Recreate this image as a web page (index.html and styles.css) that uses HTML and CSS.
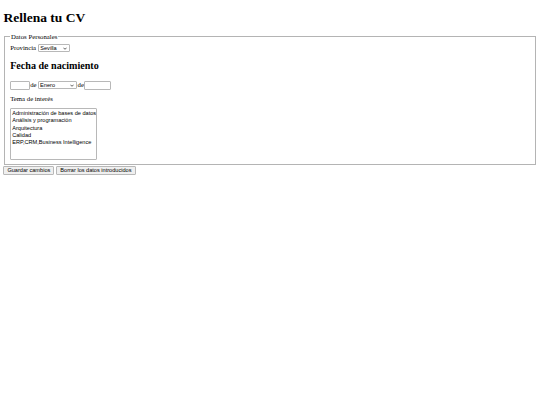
FILE: index.html
```html
<!DOCTYPE html>
<html lang="es">
<head>
    <meta charset="UTF-8">
    <meta name="viewport" content="width=device-width, initial-scale=1.0">
    <title>Rellena tu CV</title>
    <link rel="stylesheet" href="styles.css">
</head>
<body>
    <h1>Rellena tu CV</h1>
    <form class="cv-form">
        <fieldset class="datos">
            <legend>Datos Personales</legend>
            <label>Provincia <select class="provincia" name="provincia">
                <option>Sevilla</option>
                <option>Cádiz</option>
                <option>Huelva</option>
                <option>Málaga</option>
            </select></label>

            <h2>Fecha de nacimiento</h2>
            <div class="fecha">
                <input type="text" class="dia" name="dia">de<select class="mes" name="mes">
                    <option>Enero</option>
                    <option>Febrero</option>
                    <option>Marzo</option>
                </select>de<input type="text" class="anio" name="anio">
            </div>

            <p class="tema">Tema de interés</p>
            <select class="temas" name="temas" multiple>
                <option>Administración de bases de datos</option>
                <option>Análisis y programación</option>
                <option>Arquitectura</option>
                <option>Calidad</option>
                <option>ERP,CRM,Business Intelligence</option>
            </select>
        </fieldset>
        <div class="acciones">
            <input type="submit" value="Guardar cambios">
            <input type="reset" value="Borrar los datos introducidos">
        </div>
    </form>
</body>
</html>
```

FILE: styles.css
```css
body {
    margin: 3.4px;
    font-family: "Liberation Serif", serif;
    font-size: 6.75px;
    color: #000;
    background: #fff;
}
h1 {
    font-size: 13.5px;
    margin: 6.5px 0 7.5px;
}
h2 {
    font-size: 10.1px;
    margin: 7.5px 0 10px;
}
.datos {
    margin: 0 0.8px;
    padding: 3.5px 5px 4.2px;
    border: 1px solid #b4b4b4;
}
.datos legend {
    padding: 0 0.8px;
}
select, input {
    font-family: "Liberation Sans", Arial, sans-serif;
    font-size: 5.6px;
    color: #000;
    box-sizing: border-box;
    margin: 0;
    vertical-align: middle;
}
/* dropdowns get a small drawn chevron instead of the native arrow */
.provincia, .mes {
    appearance: none;
    -webkit-appearance: none;
    height: 8px;
    padding: 0 0 0 1.5px;
    border: 1px solid #b8b8b8;
    border-radius: 1px;
    background: #fff url("data:image/svg+xml;utf8,<svg xmlns='http://www.w3.org/2000/svg' width='5' height='3' viewBox='0 0 5 3'><path d='M0.5 0.5 L2.5 2.5 L4.5 0.5' fill='none' stroke='%23222' stroke-width='0.9'/></svg>") no-repeat right 2px center / 4px 3px;
    line-height: 6px;
}
.provincia { width: 32px; }
.mes { width: 39px; margin: 0 1px; }
.fecha input {
    height: 8.5px;
    border: 1px solid #b8b8b8;
    border-radius: 1px;
    padding: 0 1px;
}
.dia { width: 20px; }
.anio { width: 27px; }
.tema {
    margin: 5px 0 6px;
}
.temas {
    display: block;
    width: 87px;
    height: 52px;
    padding: 1px 0;
    border: 1px solid #b8b8b8;
    border-radius: 1px;
    overflow: hidden;
}
.temas option {
    padding: 0.6px 1px;
    min-height: 0;
}
.acciones {
    display: flex;
    gap: 2px;
    margin-top: 1px;
}
.acciones input {
    height: 9px;
    padding: 0 3px;
    border: 1px solid #b8b8b8;
    border-radius: 1px;
    background: #efefef;
}
```
